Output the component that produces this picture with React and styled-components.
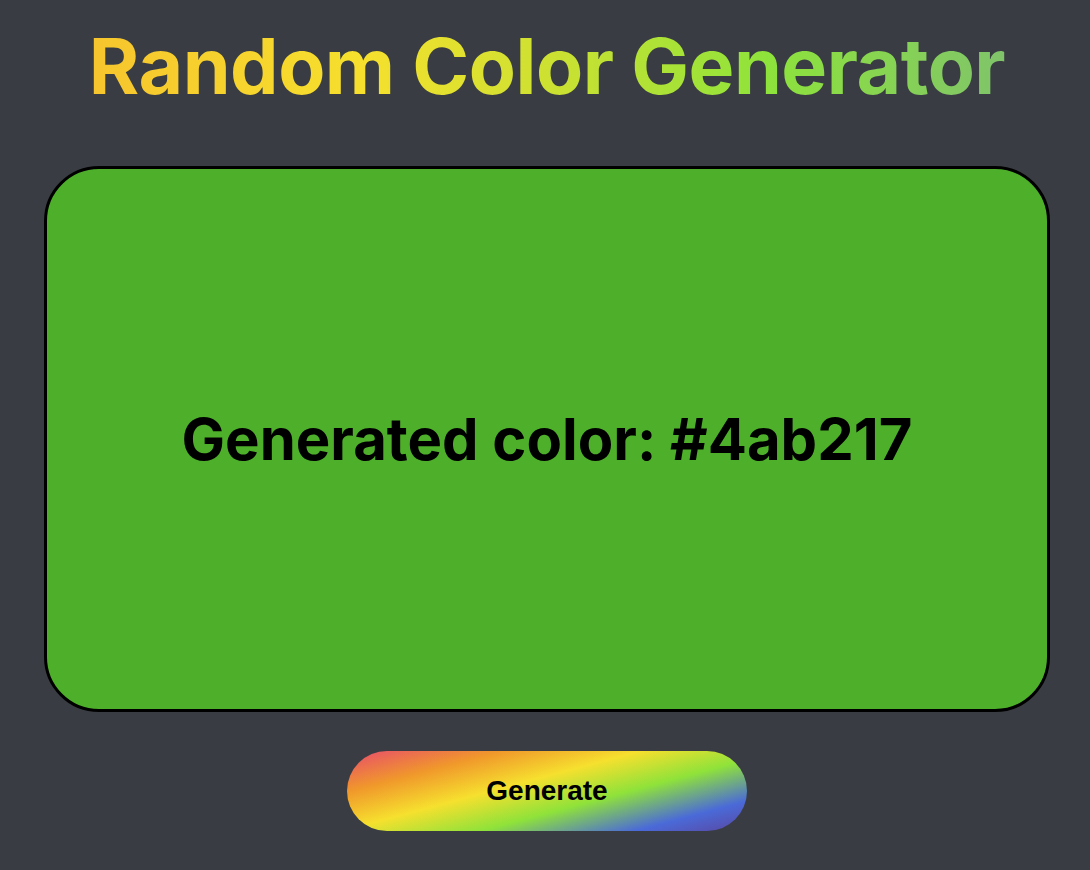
import React, { useState } from "react";
import styled, { createGlobalStyle } from "styled-components";

const GlobalStyle = createGlobalStyle`
  html, body {
    margin: 0;
    padding: 0;
    background-color: #393d43;
  }
`;

const App = () => {
  const [color, setColor] = useState("#4ab217");

  const generate = () => {
    const hex = Math.floor(Math.random() * 0xffffff)
      .toString(16)
      .padStart(6, "0");
    setColor(`#${hex}`);
  };

  return (
    <Container>
      <GlobalStyle />
      <Title>Random Color Generator</Title>
      <ColorBox bg={color === "#4ab217" ? "#4eb02a" : color}>
        <ColorText>Generated color: {color}</ColorText>
      </ColorBox>
      <GenerateBtn onClick={generate}>Generate</GenerateBtn>
    </Container>
  );
};

export default App;

const Container = styled.div`
  min-height: 100vh;
  display: flex;
  flex-direction: column;
  align-items: center;
  padding: 0 40px 0 44px;
  box-sizing: border-box;
  font-family: Inter, "Noto Sans", sans-serif;
`;

const Title = styled.h1`
  margin: 19px 0 0;
  font-size: 77px;
  font-weight: 700;
  letter-spacing: -0.5px;
  background: linear-gradient(90deg, #f7c52e 0%, #f6e02d 30%, #c9e132 52%, #8ee33b 74%, #80c46a 100%);
  -webkit-background-clip: text;
  background-clip: text;
  color: transparent;
`;

const ColorBox = styled.div`
  margin-top: 53px;
  width: 100%;
  height: 546px;
  box-sizing: border-box;
  border: 3px solid #000;
  border-radius: 55px;
  background-color: ${({ bg }) => bg};
  display: flex;
  justify-content: center;
  align-items: center;
`;

const ColorText = styled.div`
  font-size: 58px;
  font-weight: 700;
  color: #000;
`;

const GenerateBtn = styled.button`
  margin-top: 39px;
  width: 400px;
  height: 80px;
  border: 0;
  outline: none;
  border-radius: 40px;
  font-family: "Liberation Sans", Arial, sans-serif;
  font-size: 28px;
  font-weight: 700;
  color: #000;
  cursor: pointer;
  background: linear-gradient(165deg, #e84a6e 0%, #f0982b 22%, #f6e02e 42%, #8fe23a 62%, #4a6ad8 84%, #5a46a0 100%);
`;
